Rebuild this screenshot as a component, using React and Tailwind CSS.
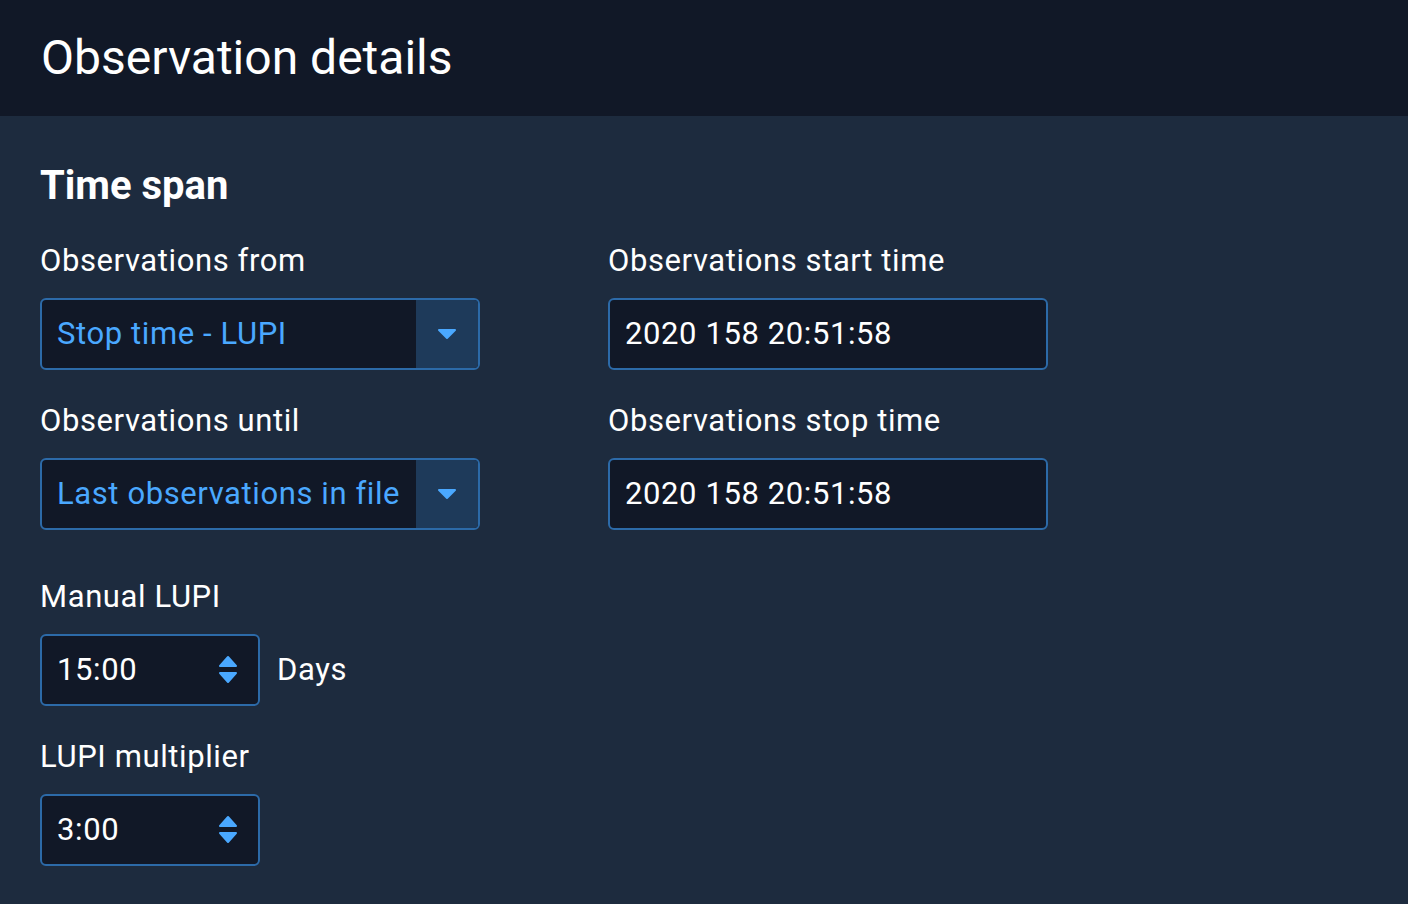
import { useState } from 'react'

function Caret() {
  return (
    <svg width="20" height="12" viewBox="0 0 20 12" className="text-[#4aa8ff]">
      <path d="M2 2H18L10 10Z" fill="currentColor" stroke="currentColor" strokeWidth="2" strokeLinejoin="round" />
    </svg>
  )
}

function Spinner() {
  return (
    <svg width="20" height="32" viewBox="0 0 20 32" className="text-[#4aa8ff]">
      <path d="M2 12H18L10 3Z" fill="currentColor" stroke="currentColor" strokeWidth="2" strokeLinejoin="round" />
      <path d="M2 19H18L10 28Z" fill="currentColor" stroke="currentColor" strokeWidth="2" strokeLinejoin="round" />
    </svg>
  )
}

function Select({ value }) {
  return (
    <div className="flex h-[72px] w-[440px] overflow-hidden rounded-md border-2 border-[#2c6aa8] bg-[#111827]">
      <div className="flex flex-1 items-center pl-[15px] text-[31px] tracking-[0.6px] text-[#4aa8ff]">{value}</div>
      <div className="flex w-[62px] items-center justify-center bg-[#1e3a5a]">
        <Caret />
      </div>
    </div>
  )
}

function TextBox({ value }) {
  return (
    <div className="flex h-[72px] w-[440px] items-center rounded-md border-2 border-[#2c6aa8] bg-[#111827] pl-[15px] text-[31px] tracking-[0.6px] text-white">
      {value}
    </div>
  )
}

function NumberBox({ value }) {
  return (
    <div className="flex h-[72px] w-[220px] items-center justify-between rounded-md border-2 border-[#2c6aa8] bg-[#111827] pl-[15px] pr-[20px] text-[31px] tracking-[0.6px] text-white">
      <span>{value}</span>
      <Spinner />
    </div>
  )
}

function Label({ children }) {
  return <div className="mb-[19px] h-9 text-[31px] leading-9 tracking-[0.6px] text-white">{children}</div>
}

export default function App() {
  const [lupi] = useState('15:00')
  const [mult] = useState('3:00')

  return (
    <div className="min-h-[904px] bg-[#1d2b3e] font-['Roboto',sans-serif]">
      <div className="flex h-[116px] items-center bg-[#111827] px-[41px]">
        <h1 className="text-[48px] text-white">Observation details</h1>
      </div>

      <div className="px-[40px] pt-[46px]">
        <h2 className="mb-[33px] h-12 text-[40px] font-bold leading-[48px] text-white">Time span</h2>

        <div className="grid w-[1008px] grid-cols-2 gap-x-[128px]">
          <div>
            <Label>Observations from</Label>
            <Select value="Stop time - LUPI" />
          </div>
          <div>
            <Label>Observations start time</Label>
            <TextBox value="2020 158 20:51:58" />
          </div>
          <div className="mt-[33px]">
            <Label>Observations until</Label>
            <Select value="Last observations in file" />
          </div>
          <div className="mt-[33px]">
            <Label>Observations stop time</Label>
            <TextBox value="2020 158 20:51:58" />
          </div>
        </div>

        <div className="mt-[49px]">
          <Label>Manual LUPI</Label>
          <div className="flex items-center gap-[17px]">
            <NumberBox value={lupi} />
            <span className="text-[31px] tracking-[0.6px] text-white">Days</span>
          </div>
        </div>

        <div className="mt-[33px]">
          <Label>LUPI multiplier</Label>
          <NumberBox value={mult} />
        </div>
      </div>
    </div>
  )
}
